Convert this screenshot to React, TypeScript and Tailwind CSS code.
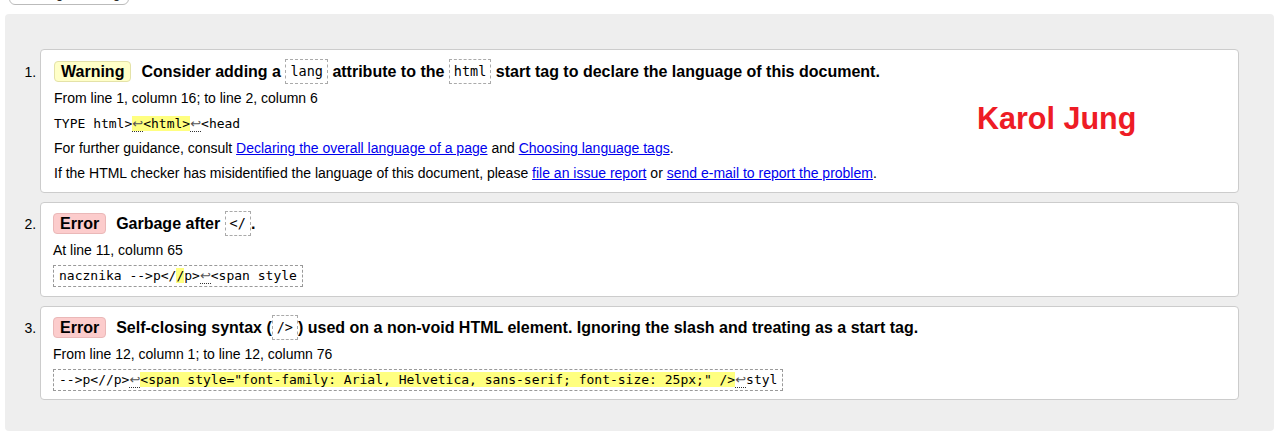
import React from "react";

const monoFont = "font-['DejaVu_Sans_Mono','Liberation_Mono',monospace]";

const Code = ({ children }: { children: React.ReactNode }) => (
  <code
    className={`inline-block align-top border border-dashed border-[#aaa] px-[4px] leading-[23px] text-[13.5px] font-normal ${monoFont}`}
  >
    {children}
  </code>
);

const Lf = () => (
  <span className="border-b border-dotted border-[#333] text-[#555] font-['DejaVu_Sans',sans-serif]">↩</span>
);

const Mark = ({ children }: { children: React.ReactNode }) => (
  <mark className="bg-[#ffff80] text-inherit">{children}</mark>
);

const Badge = ({ kind }: { kind: "Warning" | "Error" }) => (
  <strong
    className={
      kind === "Warning"
        ? "inline-block align-top mt-[2px] leading-[19px] px-[6px] mr-[10px] rounded-[4px] border border-[#e4e2a8] bg-[#ffffc8]"
        : "inline-block align-top mt-[2px] leading-[19px] px-[6px] mr-[10px] rounded-[4px] border border-[#eab8b8] bg-[#fccccc]"
    }
  >
    {kind}
  </strong>
);

const A = ({ children }: { children: React.ReactNode }) => (
  <a href="#" className="text-[#0000ee] underline">
    {children}
  </a>
);

const mono = `${monoFont} text-[13px]`;

export default function App() {
  return (
    <div className="bg-white h-[434px] overflow-hidden text-black text-[14px] font-['Liberation_Sans',Arial,sans-serif]">
      <div className="h-[5px] mb-[9px] overflow-hidden pl-[9px] flex flex-col justify-end items-start">
        <button className="shrink-0 h-[22px] w-[120px] rounded-[6px] border border-[#bbb] bg-white text-[13px] leading-[18px]">
          Message Filtering
        </button>
      </div>

      <div className="ml-[5px] mr-[3px] rounded-[4px] bg-[#eeeeee] pt-[35px] pb-[31px] pl-[35px] pr-[35px]">
        <ol className="list-decimal flex flex-col gap-[9px]">
          <li className="relative bg-white border border-[#cccccc] rounded-[4px] pl-[13px] pt-[9px] pb-[6px]">
            <p className="font-bold text-[16px] leading-[25px] mb-[2px]">
              <Badge kind="Warning" />
              Consider adding a <Code>lang</Code> attribute to the <Code>html</Code> start tag to declare the language of
              this document.
            </p>
            <p className="leading-[25px]">From line 1, column 16; to line 2, column 6</p>
            <p className={`leading-[25px] ${mono}`}>
              TYPE html&gt;
              <Mark>
                <Lf />
                &lt;html&gt;
              </Mark>
              <Lf />
              &lt;head
            </p>
            <p className="leading-[25px]">
              For further guidance, consult <A>Declaring the overall language of a page</A> and{" "}
              <A>Choosing language tags</A>.
            </p>
            <p className="leading-[25px]">
              If the HTML checker has misidentified the language of this document, please <A>file an issue report</A> or{" "}
              <A>send e-mail to report the problem</A>.
            </p>
            <span className="absolute left-[936px] top-[51px] text-[30.5px] leading-[34px] font-bold text-[#ee1c25]">
              Karol Jung
            </span>
          </li>

          <li className="bg-white border border-[#cccccc] rounded-[4px] pl-[12px] pt-[8px] pb-[9px]">
            <p className="font-bold text-[16px] leading-[25px] mb-[2px]">
              <Badge kind="Error" />
              Garbage after <Code>&lt;/</Code>.
            </p>
            <p className="leading-[25px]">At line 11, column 65</p>
            <p className={`w-fit mt-[2px] border border-dashed border-[#999] px-[5px] leading-[20px] ${mono}`}>
              nacznika --&gt;p&lt;/<Mark>/</Mark>p&gt;
              <Lf />
              &lt;span style
            </p>
          </li>

          <li className="bg-white border border-[#cccccc] rounded-[4px] pl-[12px] pt-[8px] pb-[8px]">
            <p className="font-bold text-[16px] leading-[25px] mb-[2px]">
              <Badge kind="Error" />
              Self-closing syntax (<Code>/&gt;</Code>) used on a non-void HTML element. Ignoring the slash and treating as
              a start tag.
            </p>
            <p className="leading-[25px]">From line 12, column 1; to line 12, column 76</p>
            <p className={`w-fit mt-[2px] border border-dashed border-[#999] px-[5px] leading-[20px] ${mono}`}>
              --&gt;p&lt;//p&gt;
              <Lf />
              <Mark>&lt;span style="font-family: Arial, Helvetica, sans-serif; font-size: 25px;" /&gt;</Mark>
              <Lf />
              styl
            </p>
          </li>
        </ol>
      </div>
    </div>
  );
}
